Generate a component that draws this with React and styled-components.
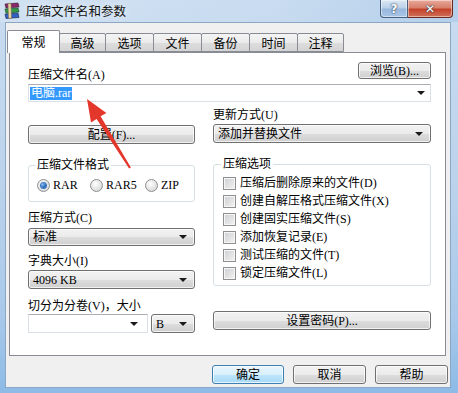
import React from 'react';
import styled, { createGlobalStyle } from 'styled-components';

const FONT = `"Liberation Serif", "Noto Sans CJK SC", serif`;

const GlobalStyle = createGlobalStyle`
html, body { margin:0; padding:0; background:#fff; }
body { font-family: ${FONT}; font-size:12px; color:#000; }
`;

const Window = styled.div`
position:relative;
width:458px;
height:393px;
box-sizing:border-box;
display:flex;
flex-direction:column;
overflow:hidden;
background:linear-gradient(180deg, #c9dcf0 0%, #bcd3ec 45%, #a9c9ea 80%, #8cbbe6 100%);
`;

const TitleBar = styled.div`
display:flex;
align-items:flex-start;
height:22px;
flex-shrink:0;
background:linear-gradient(90deg, rgba(255,255,255,0.15) 0%, rgba(255,255,255,0) 60%, rgba(120,170,220,0.25) 100%);
`;

const AppIcon = styled.svg`
margin:2px 0 0 3px;
flex-shrink:0;
`;

const Title = styled.div`
margin:3px 0 0 5px;
font-family:"Noto Sans CJK SC", sans-serif;
font-size:12.5px;
line-height:16px;
color:#111;
text-shadow:0 0 6px rgba(255,255,255,0.9);
`;

const Caption = styled.div`
display:flex;
margin:0 5px 0 auto;
`;

const CapButton = styled.div`
width:${p => p.$w}px;
height:18px;
box-sizing:border-box;
border:1px solid ${p => p.$close ? '#6b2a20' : '#48607e'};
border-top:none;
border-left:${p => p.$close ? 'none' : undefined};
border-radius:${p => p.$close ? '0 0 4px 0' : '0 0 0 4px'};
background:${p => p.$close
  ? 'linear-gradient(180deg, #e9a99b 0%, #d8806c 45%, #c4432a 55%, #d0705a 100%)'
  : 'linear-gradient(180deg, #dbe7f4 0%, #bcd2ea 45%, #98b8dd 55%, #a9c6e6 100%)'};
box-shadow:inset 0 0 0 1px rgba(255,255,255,0.45);
display:flex;
align-items:center;
justify-content:center;
color:#fff;
font-family:"DejaVu Sans", sans-serif;
font-weight:bold;
font-size:12px;
line-height:12px;
text-shadow:0 0 2px #2b3d55, 0 0 1px #2b3d55;
`;

const Body = styled.div`
flex:1;
margin:0 7px 5px 5px;
background:#f0f0f0;
border:1px solid #8ba7c4;
padding:7px 4px 0 3px;
display:flex;
flex-direction:column;
`;

const TabRow = styled.div`
display:flex;
align-items:flex-end;
height:22px;
margin-left:-2px;
position:relative;
z-index:1;
`;

const Tab = styled.div`
width:${p => p.$w}px;
height:${p => p.$active ? 23 : 19}px;
margin-bottom:${p => p.$active ? -1 : 0}px;
margin-left:${p => p.$first ? 0 : -1}px;
box-sizing:border-box;
border:1px solid #898c95;
border-bottom:${p => p.$active ? 'none' : '1px solid #898c95'};
border-radius:2px 2px 0 0;
background:${p => p.$active ? '#fff' : 'linear-gradient(180deg, #f4f4f4 0%, #ebebeb 50%, #dddddd 51%, #d4d4d4 100%)'};
font-family:"Noto Sans CJK SC", sans-serif;
font-size:12px;
line-height:14px;
padding-top:${p => p.$active ? 4 : 2}px;
text-align:center;
z-index:${p => p.$active ? 2 : 1};
`;

const Panel = styled.div`
height:304px;
box-sizing:border-box;
background:#fff;
border:1px solid #898c95;
padding:9px 14px 0 18px;
`;

const TopRow = styled.div`
display:flex;
justify-content:space-between;
align-items:flex-end;
height:17px;
`;

const Label = styled.div`
font-size:12px;
line-height:14px;
white-space:nowrap;
margin-top:${p => p.$mt || 0}px;
margin-bottom:${p => p.$mb || 0}px;
`;

const Button = styled.div`
width:${p => p.$w ? p.$w + 'px' : 'auto'};
height:${p => p.$h || 19}px;
margin-top:${p => p.$mt || 0}px;
box-sizing:border-box;
border:1px solid ${p => p.$default ? '#3c7fb1' : '#707070'};
border-radius:3px;
background:${p => p.$default
  ? 'linear-gradient(180deg, #eaf6fd 0%, #d9f0fc 50%, #bee6fd 51%, #a7d9f5 100%)'
  : 'linear-gradient(180deg, #f2f2f2 0%, #ebebeb 50%, #dddddd 51%, #cfcfcf 100%)'};
box-shadow:inset 0 0 0 1px rgba(255,255,255,0.7);
display:flex;
align-items:center;
justify-content:center;
font-size:12px;
line-height:14px;
white-space:nowrap;
`;

const FileInput = styled.div`
margin-top:5px;
height:18px;
box-sizing:border-box;
border:1px solid #dbdfe6;
border-top-color:#abadb3;
background:#fff;
display:flex;
align-items:center;
padding-left:1px;
`;

const Selected = styled.span`
background:#3399ff;
color:#fff;
font-size:12px;
line-height:13px;
padding:0 1px;
`;

const Arrow = styled.span`
margin:0 ${p => p.$mr || 7}px 0 auto;
width:0;
height:0;
border-left:4px solid transparent;
border-right:4px solid transparent;
border-top:4px solid #1a1a1a;
flex-shrink:0;
`;

const Grid = styled.div`
display:grid;
grid-template-columns:167px 218px;
column-gap:18px;
margin-top:6px;
`;

const Col = styled.div`
display:flex;
flex-direction:column;
`;

const Group = styled.fieldset`
margin:${p => p.$mt || 0}px 0 0 0;
padding:${p => p.$pad};
min-width:0;
border:1px solid #d5dfe5;
border-radius:3px;
`;

const Legend = styled.legend`
font-size:12px;
line-height:14px;
padding:0 2px;
margin-left:-2px;
`;

const RadioRow = styled.div`
display:flex;
align-items:center;
height:14px;
`;

const RadioItem = styled.div`
display:flex;
align-items:center;
width:${p => p.$w ? p.$w + 'px' : 'auto'};
font-size:12px;
line-height:14px;
`;

const RadioDot = styled.span`
width:13px;
height:13px;
box-sizing:border-box;
border-radius:50%;
border:1px solid #8e8f8f;
background:radial-gradient(circle at 40% 35%, #ffffff 0%, #e6e6e6 50%, #c9cdd2 100%);
margin-right:3px;
display:flex;
align-items:center;
justify-content:center;
flex-shrink:0;
&::after {
  content:'';
  display:${p => p.$checked ? 'block' : 'none'};
  width:5px;
  height:5px;
  border-radius:50%;
  background:radial-gradient(circle at 35% 35%, #8cc6f5 0%, #1f63b5 60%, #0d3f7c 100%);
  box-shadow:0 0 0 1px #3a78c4;
}
`;

const Combo = styled.div`
height:${p => p.$h || 19}px;
width:${p => p.$w ? p.$w + 'px' : 'auto'};
margin-top:${p => p.$mt || 0}px;
box-sizing:border-box;
border:1px solid #707070;
border-radius:3px;
background:linear-gradient(180deg, #f2f2f2 0%, #ebebeb 50%, #dddddd 51%, #cfcfcf 100%);
box-shadow:inset 0 0 0 1px rgba(255,255,255,0.7);
display:flex;
align-items:center;
padding-left:4px;
font-size:12px;
line-height:14px;
white-space:nowrap;
`;

const EditCombo = styled(Combo)`
background:#fff;
border:1px solid #dbdfe6;
border-top-color:#abadb3;
border-radius:0;
box-shadow:none;
`;

const SplitRow = styled.div`
display:flex;
gap:3px;
margin-top:1px;
`;

const CheckRow = styled.div`
display:flex;
align-items:center;
height:18px;
font-size:12px;
line-height:14px;
white-space:nowrap;
`;

const CheckBox = styled.span`
width:13px;
height:13px;
box-sizing:border-box;
border:1px solid #8e8f8f;
background:linear-gradient(135deg, #cdd0d4 0%, #e4e4e4 60%, #f4f4f4 100%);
box-shadow:inset 0 0 0 1px #f6f6f6;
margin-right:4px;
flex-shrink:0;
`;

const Footer = styled.div`
display:flex;
justify-content:flex-end;
gap:9px;
margin:9px -2px 0 0;
`;

const Annotation = styled.svg`
position:absolute;
left:0;
top:0;
pointer-events:none;
`;

const tabs = [['常规', 53], ['高级', 47], ['选项', 49], ['文件', 49], ['备份', 49], ['时间', 49], ['注释', 47]];
const options = ['压缩后删除原来的文件(D)', '创建自解压格式压缩文件(X)', '创建固实压缩文件(S)', '添加恢复记录(E)', '测试压缩的文件(T)', '锁定压缩文件(L)'];

export default function App() {
  return (
    <Window>
      <GlobalStyle />
      <TitleBar>
        <AppIcon width="18" height="18" viewBox="0 0 18 18">
          <path d="M2 2 L15 1 L16 5 L3 6 Z" fill="#8b2a6b" stroke="#3d1030" strokeWidth="0.6" />
          <path d="M2 7 L15 6 L16 10 L3 11 Z" fill="#2f9b48" stroke="#10401c" strokeWidth="0.6" />
          <path d="M2 12 L15 11 L16 15.5 L3 16.5 Z" fill="#3060c0" stroke="#102450" strokeWidth="0.6" />
          <path d="M5 1.5 L8 1.3 L8.5 16.2 L5.5 16.4 Z" fill="#e8d6a8" stroke="#7a6236" strokeWidth="0.5" />
        </AppIcon>
        <Title>压缩文件名和参数</Title>
        <Caption>
          <CapButton $w={28}>?</CapButton>
          <CapButton $w={45} $close>✕</CapButton>
        </Caption>
      </TitleBar>
      <Body>
        <TabRow>
          {tabs.map(([t, w], i) => (
            <Tab key={t} $w={w} $active={i === 0} $first={i === 0}>{t}</Tab>
          ))}
        </TabRow>
        <Panel>
          <TopRow>
            <Label $mb={-3}>压缩文件名(A)</Label>
            <Button $w={73} $h={17}>浏览(B)...</Button>
          </TopRow>
          <FileInput>
            <Selected>电脑.rar</Selected>
            <Arrow $mr={5} />
          </FileInput>
          <Grid>
            <Col>
              <Button $mt={17}>配置(F)...</Button>
              <Group $mt={14} $pad="6px 8px 9px 8px">
                <Legend>压缩文件格式</Legend>
                <RadioRow>
                  <RadioItem $w={53}><RadioDot $checked />RAR</RadioItem>
                  <RadioItem $w={55}><RadioDot />RAR5</RadioItem>
                  <RadioItem><RadioDot />ZIP</RadioItem>
                </RadioRow>
              </Group>
              <Label $mt={9}>压缩方式(C)</Label>
              <Combo $mt={3} $h={18}>标准<Arrow /></Combo>
              <Label $mt={8}>字典大小(I)</Label>
              <Combo $mt={2}>4096 KB<Arrow /></Combo>
              <Label $mt={10}>切分为分卷(V)，大小</Label>
              <SplitRow>
                <EditCombo $w={120}><Arrow $mr={9} /></EditCombo>
                <Combo $w={44}>B<Arrow /></Combo>
              </SplitRow>
            </Col>
            <Col>
              <Label>更新方式(U)</Label>
              <Combo $mt={2}>添加并替换文件<Arrow /></Combo>
              <Group $mt={14} $pad="3px 8px 3px 9px">
                <Legend>压缩选项</Legend>
                {options.map(o => (
                  <CheckRow key={o}><CheckBox />{o}</CheckRow>
                ))}
              </Group>
              <Button $mt={25}>设置密码(P)...</Button>
            </Col>
          </Grid>
        </Panel>
        <Footer>
          <Button $w={72} $default>确定</Button>
          <Button $w={73}>取消</Button>
          <Button $w={73}>帮助</Button>
        </Footer>
      </Body>
      <Annotation width="458" height="393" viewBox="0 0 458 393">
        <polygon
          points="87,99 106.4,112.9 100.6,116.3 130.9,167.4 129.1,168.6 96.6,119.0 91.0,122.5"
          fill="#e4372b"
        />
      </Annotation>
    </Window>
  );
}
